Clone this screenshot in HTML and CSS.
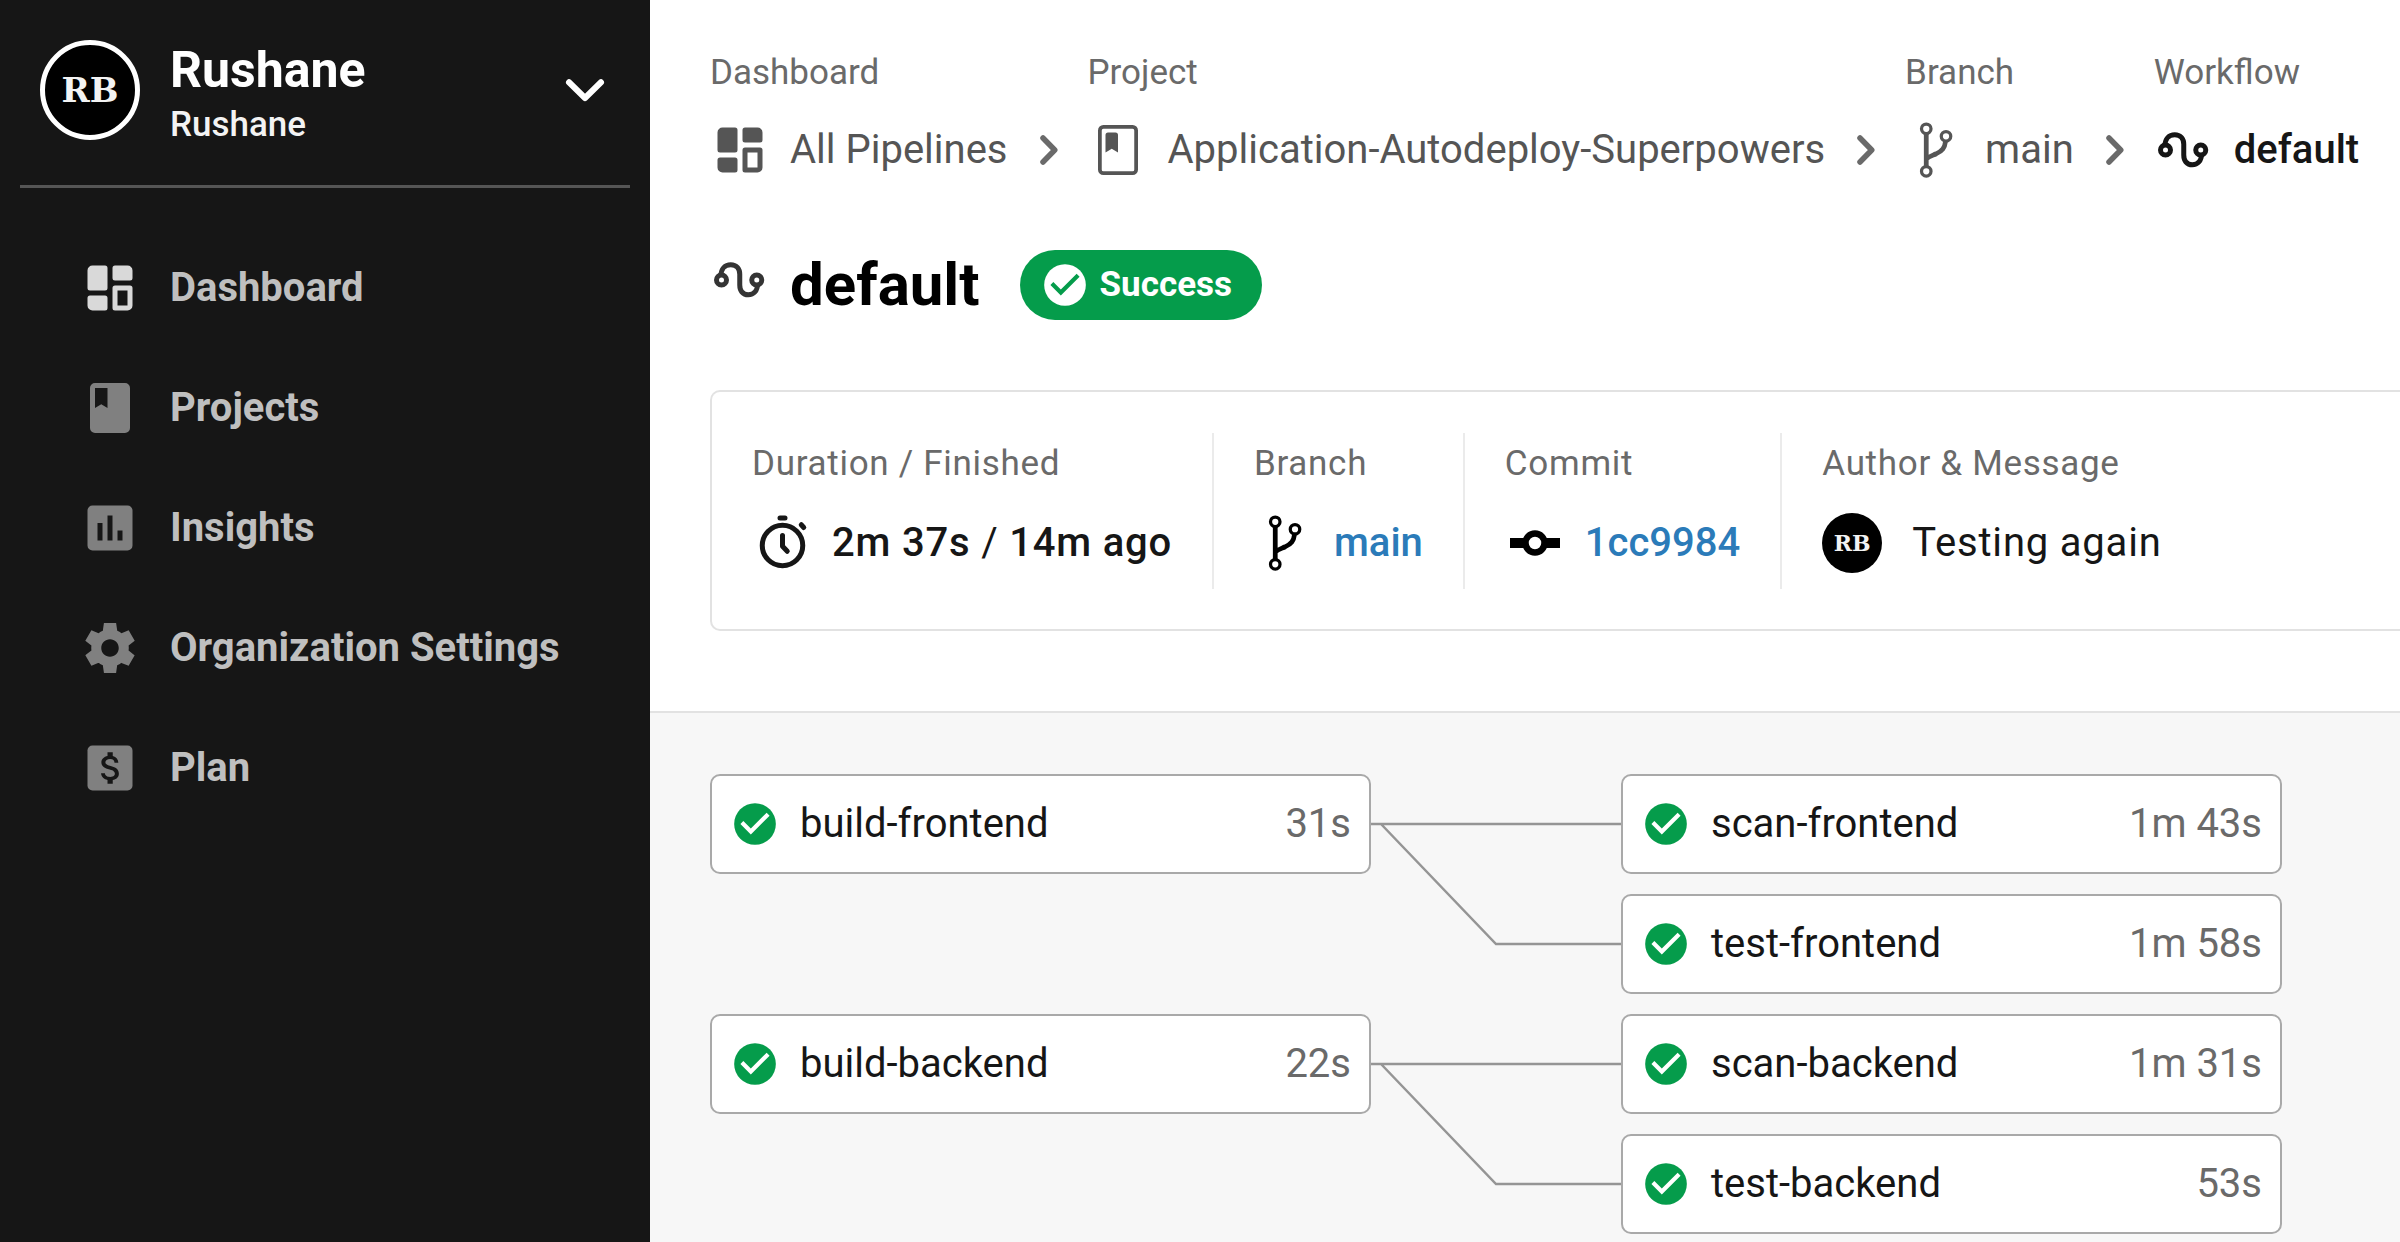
FILE: index.html
```html
<!DOCTYPE html>
<html lang="en">
<head>
  <meta charset="utf-8">
  <title>default – Application-Autodeploy-Superpowers</title>
  <link rel="stylesheet" href="styles.css">
</head>
<body>
  <svg class="sprite" aria-hidden="true">
    <symbol id="i-dashboard" viewBox="0 0 24 24">
      <path fill="currentColor" fill-rule="evenodd" d="M5 3h5a1 1 0 0 1 1 1v8a1 1 0 0 1-1 1H4a1 1 0 0 1-1-1V5a2 2 0 0 1 2-2zM4 15h6a1 1 0 0 1 1 1v4a1 1 0 0 1-1 1H5a2 2 0 0 1-2-2v-3a1 1 0 0 1 1-1zM14 3h5a2 2 0 0 1 2 2v3a1 1 0 0 1-1 1h-6a1 1 0 0 1-1-1V4a1 1 0 0 1 1-1zM14 11h6a1 1 0 0 1 1 1v7a2 2 0 0 1-2 2h-5a1 1 0 0 1-1-1v-8a1 1 0 0 1 1-1zM15 13v6h4v-6z"/>
    </symbol>
    <symbol id="i-book" viewBox="0 0 24 24">
      <path fill="currentColor" d="M18 2H6a2 2 0 0 0-2 2v16a2 2 0 0 0 2 2h12a2 2 0 0 0 2-2V4a2 2 0 0 0-2-2zM6 4h5v8l-2.500-1.500L6 12z"/>
    </symbol>
    <symbol id="i-book-outline" viewBox="0 0 24 24">
      <rect x="4.750" y="2.750" width="14.500" height="18.500" rx="1.400" fill="none" stroke="currentColor" stroke-width="1.500"/>
      <path fill="currentColor" d="M8 5h3a1 1 0 0 1 1 1v7l-2.500-1.500L7 13V6a1 1 0 0 1 1-1z"/>
    </symbol>
    <symbol id="i-insights" viewBox="0 0 24 24">
      <path fill="currentColor" d="M19 3H5a2 2 0 0 0-2 2v14a2 2 0 0 0 2 2h14a2 2 0 0 0 2-2V5a2 2 0 0 0-2-2zM9 17H7v-7h2zM13 17h-2V7h2zM17 17h-2v-4h2z"/>
    </symbol>
    <symbol id="i-settings" viewBox="0 0 24 24">
      <path fill="currentColor" d="M19.440 12.990l-.010.020c.040-.330.080-.670.080-1.010 0-.340-.030-.660-.070-.990l.010.020 2.440-1.920-2.430-4.220-2.870 1.160.010.010c-.520-.400-1.090-.740-1.710-1h.010L14.440 2H9.570l-.440 3.070h.010c-.620.260-1.190.600-1.710 1l.010-.010-2.880-1.170-2.440 4.220 2.440 1.920.010-.020c-.040.330-.070.650-.070.980 0 .340.030.680.080 1.010l-.010-.020-2.100 1.650-.330.260 2.430 4.200 2.880-1.150-.020-.040c.530.410 1.100.750 1.730 1.010h-.030L9.580 22h4.850s.030-.180.060-.420l.380-2.650h-.010c.620-.260 1.200-.600 1.730-1.010l-.020.040 2.880 1.150 2.430-4.200s-.140-.120-.330-.260l-2.110-1.660zM12 15.500c-1.930 0-3.500-1.570-3.500-3.500s1.570-3.500 3.500-3.500 3.500 1.570 3.500 3.500-1.570 3.500-3.500 3.500z"/>
    </symbol>
    <symbol id="i-plan" viewBox="0 0 24 24">
      <rect x="3" y="3" width="18" height="18" rx="2" fill="currentColor"/>
      <path class="cutout" transform="translate(4 3.600) scale(.7)" d="M11.800 10.900c-2.270-.590-3-1.200-3-2.150 0-1.090 1.010-1.850 2.700-1.850 1.780 0 2.440.850 2.500 2.100h2.210c-.070-1.720-1.120-3.300-3.210-3.810V3h-3v2.160c-1.940.420-3.500 1.680-3.500 3.610 0 2.310 1.910 3.460 4.700 4.130 2.500.600 3 1.480 3 2.410 0 .690-.490 1.790-2.700 1.790-2.060 0-2.870-.920-2.980-2.100h-2.200c.120 2.190 1.760 3.420 3.680 3.830V21h3v-2.150c1.950-.370 3.500-1.500 3.500-3.550 0-2.840-2.430-3.810-4.700-4.400z"/>
    </symbol>
    <symbol id="i-branch" viewBox="0 0 24 24">
      <g fill="none" stroke="currentColor">
        <g stroke-width="1.300">
          <circle cx="8.500" cy="3.500" r="1.900"/>
          <circle cx="8.500" cy="20.500" r="1.900"/>
          <circle cx="16.400" cy="6.500" r="1.900"/>
        </g>
        <path stroke-width="1.900" d="M8.500 5.400v13.200M16.200 8.600c-.300 2.600-1.300 3.700-3.700 4.900-1.700.800-3 1.200-4 2.100"/>
      </g>
    </symbol>
    <symbol id="i-workflow" viewBox="0 0 24 24">
      <g fill="none" stroke="currentColor" stroke-width="2">
        <circle cx="4.600" cy="12" r="2"/>
        <circle cx="18.700" cy="12" r="2"/>
        <path d="M4.400 10.200C4.400 7.500 6 5.900 8.300 5.900s3.600 1.600 3.600 3.800v4.300c0 2.300 1.200 3.900 3.400 3.900s3.700-1.600 3.700-4.300"/>
      </g>
    </symbol>
    <symbol id="i-timer" viewBox="0 0 24 24">
      <g fill="none" stroke="currentColor" stroke-width="2" stroke-linecap="round" stroke-linejoin="round">
        <circle cx="12.200" cy="13" r="8.100"/>
        <path d="M11.200 2h2M12.200 9v4.300l1.900 2M19.700 4.700l1 1.100"/>
      </g>
    </symbol>
    <symbol id="i-commit" viewBox="0 0 24 24">
      <path fill="currentColor" d="M2 10h20v4H2z"/>
      <circle class="hole" cx="12" cy="12" r="3.800" stroke="currentColor" stroke-width="2.600"/>
    </symbol>
    <symbol id="i-check" viewBox="0 0 24 24">
      <circle cx="12" cy="12" r="10" fill="currentColor"/>
      <path class="tick" d="M10 17l-5-5 1.410-1.410L10 14.170l7.590-7.590L19 8z"/>
    </symbol>
    <symbol id="i-chevron-right" viewBox="0 0 24 24">
      <path fill="none" stroke="currentColor" stroke-width="2.200" stroke-linecap="round" stroke-linejoin="round" d="M10 7.200l4.700 4.800-4.700 4.800"/>
    </symbol>
    <symbol id="i-chevron-down" viewBox="0 0 24 24">
      <path fill="none" stroke="currentColor" stroke-width="2.400" stroke-linecap="round" stroke-linejoin="round" d="M5.600 8.900l6.400 6.300 6.400-6.300"/>
    </symbol>
  </svg>

  <div class="app">
    <aside class="sidebar">
      <button class="org" type="button">
        <span class="avatar avatar-large">RB</span>
        <span class="org-text">
          <span class="org-name">Rushane</span>
          <span class="org-user">Rushane</span>
        </span>
        <svg class="icon"><use href="#i-chevron-down"/></svg>
      </button>
      <nav class="nav">
        <a class="nav-link active" href="#dashboard"><svg class="icon"><use href="#i-dashboard"/></svg>Dashboard</a>
        <a class="nav-link" href="#projects"><svg class="icon"><use href="#i-book"/></svg>Projects</a>
        <a class="nav-link" href="#insights"><svg class="icon"><use href="#i-insights"/></svg>Insights</a>
        <a class="nav-link" href="#settings"><svg class="icon"><use href="#i-settings"/></svg>Organization Settings</a>
        <a class="nav-link" href="#plan"><svg class="icon"><use href="#i-plan"/></svg>Plan</a>
      </nav>
    </aside>

    <main class="main">
      <header class="header">
        <ol class="crumbs">
          <li class="crumb">
            <span class="label">Dashboard</span>
            <span class="crumb-row">
              <a class="crumb-link" href="#all"><svg class="icon"><use href="#i-dashboard"/></svg>All Pipelines</a>
              <svg class="icon separator"><use href="#i-chevron-right"/></svg>
            </span>
          </li>
          <li class="crumb">
            <span class="label">Project</span>
            <span class="crumb-row">
              <a class="crumb-link" href="#project"><svg class="icon"><use href="#i-book-outline"/></svg>Application-Autodeploy-Superpowers</a>
              <svg class="icon separator"><use href="#i-chevron-right"/></svg>
            </span>
          </li>
          <li class="crumb">
            <span class="label">Branch</span>
            <span class="crumb-row">
              <a class="crumb-link" href="#branch"><svg class="icon"><use href="#i-branch"/></svg>main</a>
              <svg class="icon separator"><use href="#i-chevron-right"/></svg>
            </span>
          </li>
          <li class="crumb">
            <span class="label">Workflow</span>
            <span class="crumb-row">
              <a class="crumb-link current" href="#workflow" aria-current="page"><svg class="icon"><use href="#i-workflow"/></svg>default</a>
            </span>
          </li>
        </ol>

        <div class="title-row">
          <svg class="icon title-icon"><use href="#i-workflow"/></svg>
          <h1 class="title">default</h1>
          <span class="badge"><svg class="status-icon"><use href="#i-check"/></svg>Success</span>
        </div>

        <div class="summary">
          <section class="fact">
            <span class="label">Duration / Finished</span>
            <span class="fact-row strong"><svg class="icon"><use href="#i-timer"/></svg><span>2m 37s <span class="slash">/</span> 14m ago</span></span>
          </section>
          <section class="fact">
            <span class="label">Branch</span>
            <span class="fact-row strong"><svg class="icon solid"><use href="#i-branch"/></svg><a class="fact-link" href="#main">main</a></span>
          </section>
          <section class="fact">
            <span class="label">Commit</span>
            <span class="fact-row strong"><svg class="icon solid"><use href="#i-commit"/></svg><a class="fact-link" href="#1cc9984">1cc9984</a></span>
          </section>
          <section class="fact">
            <span class="label">Author &amp; Message</span>
            <span class="fact-row author"><span class="avatar">RB</span>Testing again</span>
          </section>
        </div>
      </header>

      <section class="graph">
        <a class="job" href="#build-frontend"><svg class="status-icon"><use href="#i-check"/></svg><span class="job-name">build-frontend</span><span class="job-time">31s</span></a>
        <svg class="links" viewBox="0 0 250 220"><path stroke-width="2.500" d="M0 50h250M10 50l115 120h125"/></svg>
        <a class="job" href="#scan-frontend"><svg class="status-icon"><use href="#i-check"/></svg><span class="job-name">scan-frontend</span><span class="job-time">1m 43s</span></a>
        <a class="job second" href="#test-frontend"><svg class="status-icon"><use href="#i-check"/></svg><span class="job-name">test-frontend</span><span class="job-time">1m 58s</span></a>
        <a class="job" href="#build-backend"><svg class="status-icon"><use href="#i-check"/></svg><span class="job-name">build-backend</span><span class="job-time">22s</span></a>
        <svg class="links" viewBox="0 0 250 220"><path stroke-width="2.500" d="M0 50h250M10 50l115 120h125"/></svg>
        <a class="job" href="#scan-backend"><svg class="status-icon"><use href="#i-check"/></svg><span class="job-name">scan-backend</span><span class="job-time">1m 31s</span></a>
        <a class="job second" href="#test-backend"><svg class="status-icon"><use href="#i-check"/></svg><span class="job-name">test-backend</span><span class="job-time">53s</span></a>
      </section>
    </main>
  </div>
</body>
</html>
```
FILE: styles.css
```css
* {
  box-sizing: border-box;
}

body {
  margin: 0;
  background: #fff;
  color: #161616;
  font-family: Roboto, "Liberation Sans", sans-serif;
  font-size: 40px;
  line-height: 60px;
}

a {
  color: inherit;
  text-decoration: none;
}

.sprite {
  display: none;
}

.icon {
  flex: none;
  display: block;
  width: 60px;
  height: 60px;
}

.status-icon {
  flex: none;
  display: block;
  width: 50px;
  height: 50px;
  color: #059c4b;
  --tick: #fff;
}

.tick {
  fill: var(--tick);
}

.cutout {
  fill: #161616;
}

.hole {
  fill: #fff;
}

.label {
  color: #6a6a6a;
  font-size: 35px;
  line-height: 50px;
}

.avatar {
  flex: none;
  display: flex;
  align-items: center;
  justify-content: center;
  width: 60px;
  height: 60px;
  border-radius: 50%;
  background: #000;
  color: #f3f3f3;
  font-family: "DejaVu Serif", serif;
  font-size: 22px;
  font-weight: 700;
  letter-spacing: normal;
}

.app {
  display: flex;
  min-height: 100vh;
}

/* Sidebar */

.sidebar {
  flex: none;
  width: 650px;
  padding: 0 20px;
  background: #161616;
}

.org {
  display: flex;
  align-items: flex-start;
  width: 100%;
  padding: 40px 15px 40px 20px;
  border: 0;
  border-bottom: 3px solid #555;
  background: none;
  color: #fff;
  font: inherit;
  text-align: left;
}

.org .icon {
  margin-top: 20px;
}

.avatar-large {
  width: 100px;
  height: 100px;
  border: 5px solid #fff;
  font-size: 34px;
}

.org-text {
  display: flex;
  flex: 1;
  flex-direction: column;
  gap: 5px;
  margin-left: 30px;
}

.org-name {
  font-size: 50px;
  font-weight: 700;
  line-height: 60px;
}

.org-user {
  color: #f3f3f3;
  font-size: 35px;
  font-weight: 500;
  line-height: 40px;
}

.nav {
  display: flex;
  flex-direction: column;
  padding-top: 40px;
}

.nav-link {
  display: flex;
  align-items: center;
  gap: 30px;
  height: 120px;
  padding: 0 60px;
  color: #bfbfbf;
  font-weight: 700;
  white-space: nowrap;
}

.nav-link .icon {
  color: #808080;
}

.nav-link.active .icon {
  color: #d9d9d9;
}

/* Header */

.main {
  display: flex;
  flex: 1;
  flex-direction: column;
  min-width: 0;
  overflow: hidden;
}

.header {
  padding: 48px 0 80px 60px;
  border-bottom: 2px solid #e2e2e2;
}

.crumbs {
  display: flex;
  margin: 0;
  padding: 0;
  list-style: none;
  white-space: nowrap;
}

.crumb {
  display: flex;
  flex-direction: column;
  gap: 22px;
}

.crumb-row {
  display: flex;
}

.crumb-link {
  display: flex;
  gap: 20px;
  color: #555;
}

.crumb-link.current {
  color: #161616;
  font-weight: 500;
}

.separator {
  margin: 0 10px;
  color: #6a6a6a;
}

.title-row {
  display: flex;
  align-items: center;
  margin-top: 70px;
}

.title-icon {
  align-self: flex-start;
  color: #343434;
}

.title {
  margin: 0 40px 0 20px;
  color: #000;
  font-size: 60px;
  font-weight: 700;
  line-height: 70px;
}

.badge {
  display: flex;
  align-items: center;
  gap: 10px;
  height: 70px;
  padding: 0 30px 0 20px;
  border-radius: 35px;
  background: #059c4b;
  color: #fff;
  font-size: 35px;
  font-weight: 700;
}

.badge .status-icon {
  color: #fff;
  --tick: #059c4b;
}

.summary {
  display: flex;
  margin-top: 70px;
  padding: 41px 0 40px;
  border: 2px solid #e2e2e2;
  border-right: 0;
  border-radius: 10px 0 0 10px;
  letter-spacing: 0.02em;
  white-space: nowrap;
}

.fact {
  display: flex;
  flex-direction: column;
  gap: 24px;
  padding: 6px 40px 16px;
  border-right: 2px solid #ebebeb;
}

.fact .label {
  letter-spacing: 0.02em;
}

.fact:last-child {
  border-right: 0;
}

.fact-row {
  display: flex;
  gap: 20px;
}

.fact-row.strong {
  font-weight: 500;
}

.fact-row.author {
  gap: 30px;
}

.slash {
  font-weight: 400;
}

.solid {
  color: #000;
}

.fact-link {
  color: #2b7bb9;
  letter-spacing: normal;
}

/* Job graph */

.graph {
  display: grid;
  flex: 1;
  grid-template-columns: 661px 250px 661px;
  grid-auto-rows: 100px;
  align-content: start;
  row-gap: 20px;
  padding: 61px 0 8px 60px;
  background: #f7f7f7;
}

.job {
  display: flex;
  align-items: center;
  padding: 0 18px;
  border: 2px solid #a9a9a9;
  border-radius: 10px;
  background: #fff;
}

.job.second {
  grid-column: 3;
}

.job-name {
  flex: 1;
  margin-left: 20px;
}

.job-time {
  color: #6a6a6a;
}

.links {
  grid-row: span 2;
  display: block;
  width: 250px;
  height: 220px;
  fill: none;
  stroke: #959595;
}
```
